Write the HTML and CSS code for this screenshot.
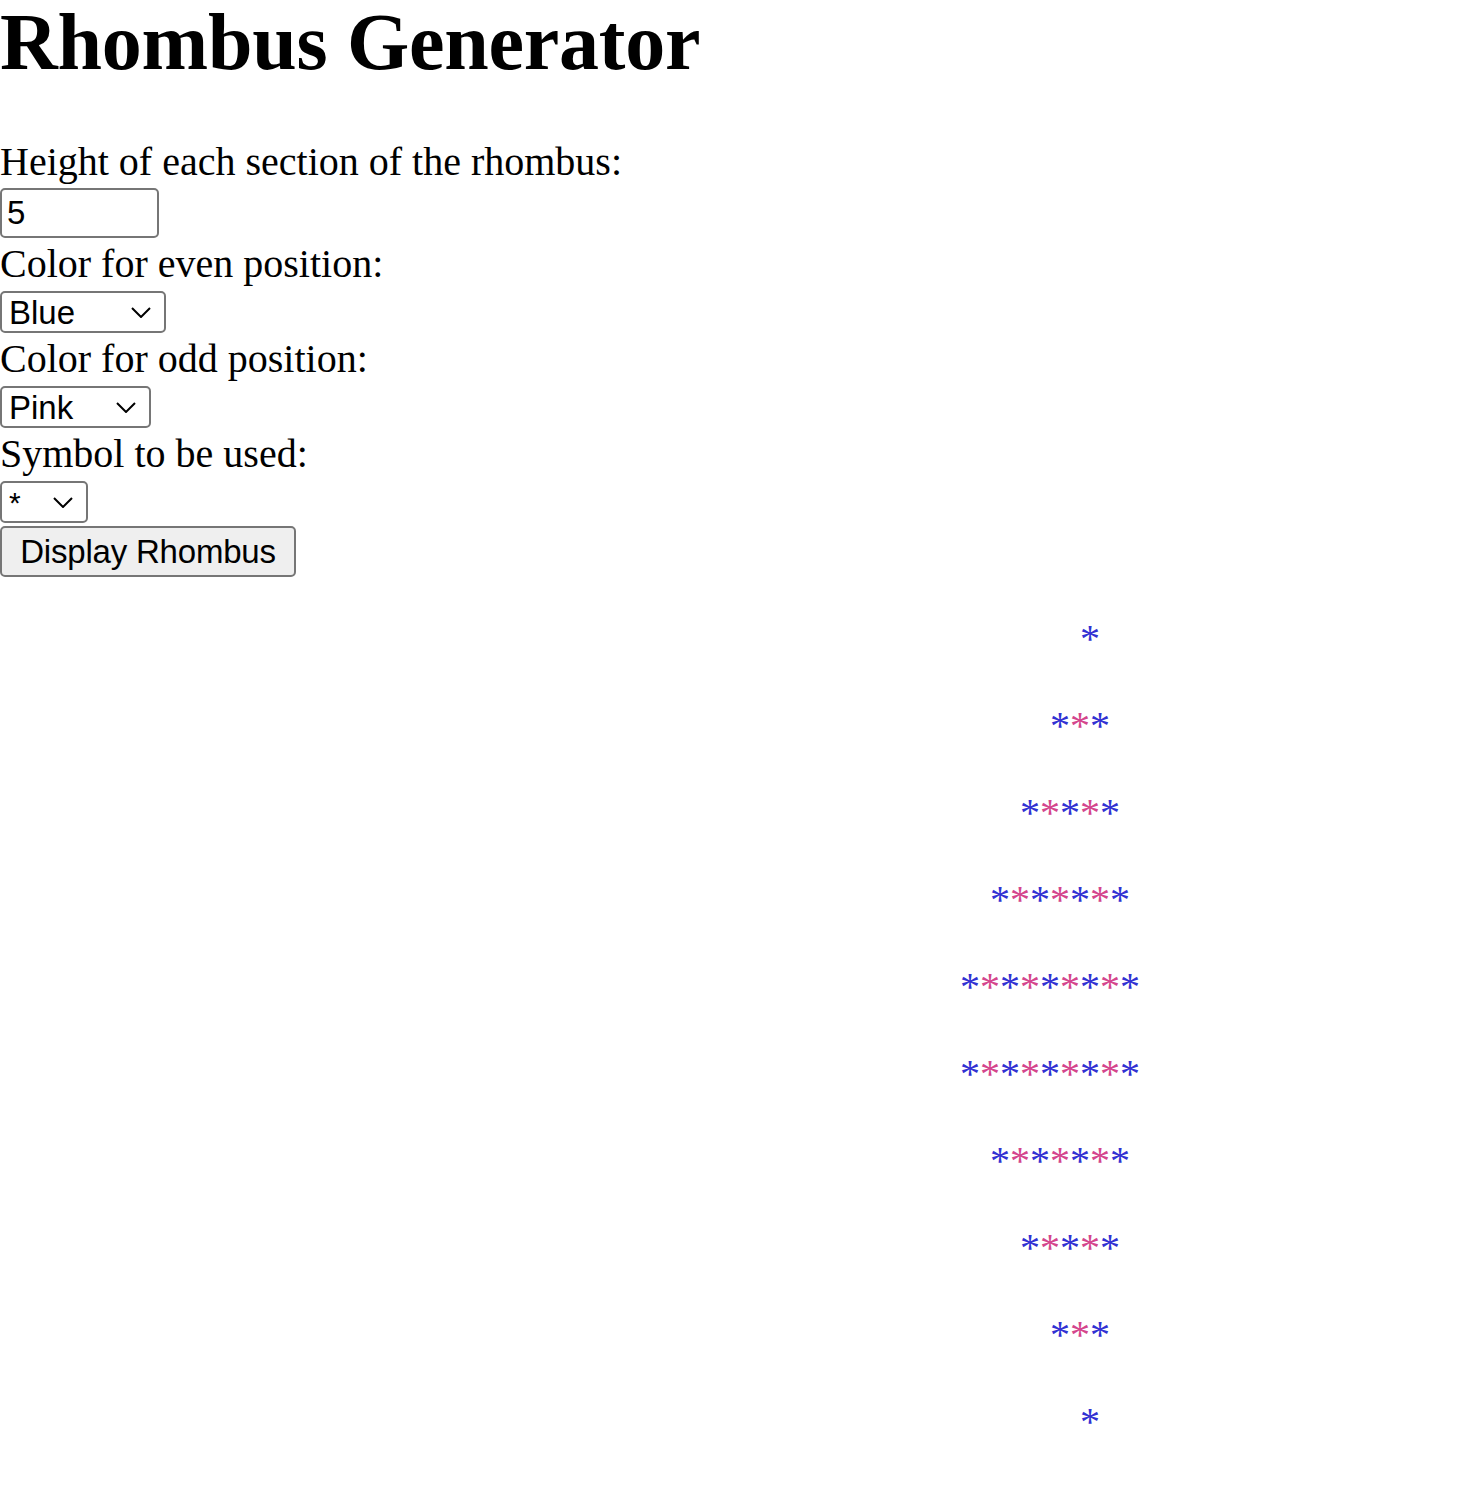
FILE: index.html
```html
<!DOCTYPE html>
<html lang="en">
<head>
<meta charset="utf-8">
<title>Rhombus Generator</title>
<link rel="stylesheet" href="styles.css">
</head>
<body>
<h1 class="title">Rhombus Generator</h1>
<form class="form">
  <label class="label" for="height">Height of each section of the rhombus:</label>
  <input class="num" id="height" type="text" value="5">
  <label class="label" for="even">Color for even position:</label>
  <select class="sel sel-even" id="even"><option>Blue</option></select>
  <label class="label" for="odd">Color for odd position:</label>
  <select class="sel sel-odd" id="odd"><option>Pink</option></select>
  <label class="label" for="sym">Symbol to be used:</label>
  <select class="sel sel-sym" id="sym"><option>*</option></select>
  <button class="btn" type="button">Display Rhombus</button>
</form>
<div class="rhombus">
  <div class="row l4"><span class="b">*</span></div>
  <div class="row l3"><span class="b">*</span><span class="p">*</span><span class="b">*</span></div>
  <div class="row l2"><span class="b">*</span><span class="p">*</span><span class="b">*</span><span class="p">*</span><span class="b">*</span></div>
  <div class="row l1"><span class="b">*</span><span class="p">*</span><span class="b">*</span><span class="p">*</span><span class="b">*</span><span class="p">*</span><span class="b">*</span></div>
  <div class="row l0"><span class="b">*</span><span class="p">*</span><span class="b">*</span><span class="p">*</span><span class="b">*</span><span class="p">*</span><span class="b">*</span><span class="p">*</span><span class="b">*</span></div>
  <div class="row l0"><span class="b">*</span><span class="p">*</span><span class="b">*</span><span class="p">*</span><span class="b">*</span><span class="p">*</span><span class="b">*</span><span class="p">*</span><span class="b">*</span></div>
  <div class="row l1"><span class="b">*</span><span class="p">*</span><span class="b">*</span><span class="p">*</span><span class="b">*</span><span class="p">*</span><span class="b">*</span></div>
  <div class="row l2"><span class="b">*</span><span class="p">*</span><span class="b">*</span><span class="p">*</span><span class="b">*</span></div>
  <div class="row l3"><span class="b">*</span><span class="p">*</span><span class="b">*</span></div>
  <div class="row l4"><span class="b">*</span></div>
</div>
</body>
</html>
```
FILE: styles.css
```css
html, body {
  margin: 0;
  padding: 0;
  background: #fff;
}
body {
  font-family: "Liberation Serif", "Times New Roman", serif;
  color: #000;
}
.title {
  font-size: 80px;
  font-weight: bold;
  line-height: 84px;
  letter-spacing: -0.25px;
  margin: 0 0 52px 0;
}
.form {
  display: flex;
  flex-direction: column;
  align-items: flex-start;
}
.label {
  font-size: 40px;
  line-height: 46px;
  padding-top: 3px;
  display: block;
}
.num, .sel, .btn {
  font-family: "Liberation Sans", Arial, sans-serif;
  font-size: 33px;
  color: #000;
  box-sizing: border-box;
  border: 2px solid #767676;
  border-radius: 5px;
  margin: 0;
}
.num {
  width: 159px;
  height: 50px;
  margin-top: 3px;
  padding: 0 5px;
  background: #fff;
}
.sel {
  appearance: none;
  -webkit-appearance: none;
  height: 42px;
  margin-top: 4px;
  padding: 0 0 0 7px;
  background-color: #fff;
  background-image: url("data:image/svg+xml,%3Csvg xmlns='http://www.w3.org/2000/svg' width='20' height='11' viewBox='0 0 20 11'%3E%3Cpath d='M1 1 L10 10 L19 1' fill='none' stroke='%23000' stroke-width='2'/%3E%3C/svg%3E");
  background-repeat: no-repeat;
  background-position: right 13px center;
  background-size: 20px 11px;
}
.sel-even { width: 166px; }
.sel-odd { width: 151px; }
.sel-sym { width: 88px; font-size: 30px; }
.btn {
  height: 51px;
  width: 296px;
  margin-top: 3px;
  padding: 0 0 0 0;
  background: #efefef;
  text-align: center;
  letter-spacing: -0.2px;
}
.rhombus {
  display: flex;
  flex-direction: column;
  gap: 40px;
  margin-top: 38px;
  padding-left: 960px;
  font-size: 40px;
}
.row {
  display: flex;
  line-height: 47px;
  height: 47px;
}
.row span {
  display: block;
  width: 20px;
  text-align: center;
}
.l1 { margin-left: 30px; }
.l2 { margin-left: 60px; }
.l3 { margin-left: 90px; }
.l4 { margin-left: 120px; }
.b { color: #3131d2; }
.p { color: #d4458c; }
```
